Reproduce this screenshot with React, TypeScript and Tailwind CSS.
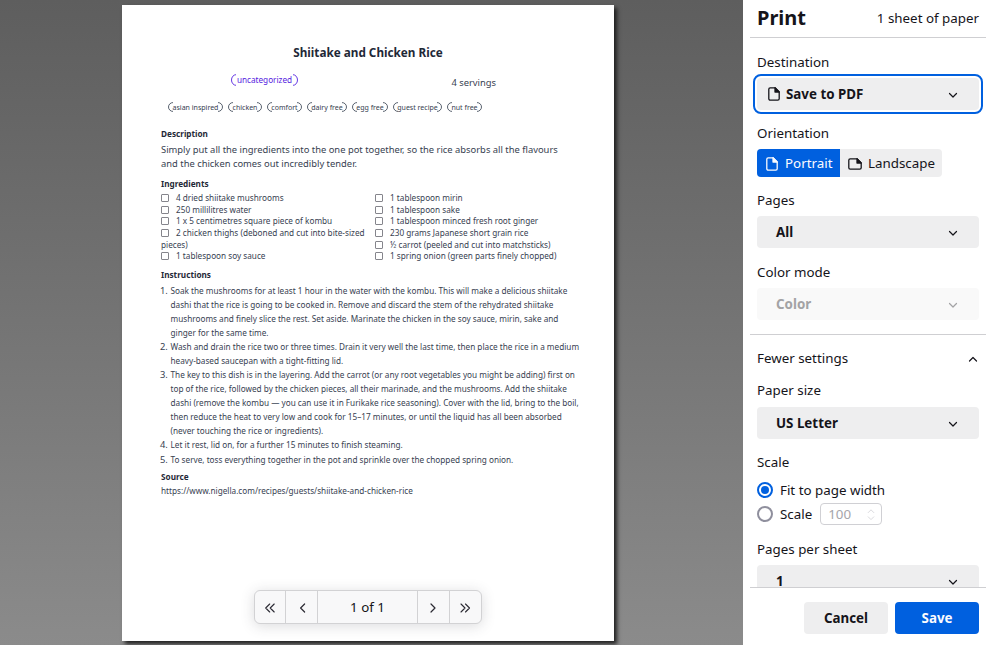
import type { ReactNode } from "react";

const tags = ["asian inspired", "chicken", "comfort", "dairy free", "egg free", "guest recipe", "nut free"];
const tagWidths = [55, 34, 35, 40, 36, 49, 35];

const leftIngredients = [
  "4 dried shiitake mushrooms",
  "250 millilitres water",
  "1 x 5 centimetres square piece of kombu",
  "2 chicken thighs (deboned and cut into bite-sized",
  "pieces)",
  "1 tablespoon soy sauce",
];
const rightIngredients = [
  "1 tablespoon mirin",
  "1 tablespoon sake",
  "1 tablespoon minced fresh root ginger",
  "230 grams Japanese short grain rice",
  "½ carrot (peeled and cut into matchsticks)",
  "1 spring onion (green parts finely chopped)",
];

const steps = [
  [
    "Soak the mushrooms for at least 1 hour in the water with the kombu. This will make a delicious shiitake",
    "dashi that the rice is going to be cooked in. Remove and discard the stem of the rehydrated shiitake",
    "mushrooms and finely slice the rest. Set aside. Marinate the chicken in the soy sauce, mirin, sake and",
    "ginger for the same time.",
  ],
  [
    "Wash and drain the rice two or three times. Drain it very well the last time, then place the rice in a medium",
    "heavy-based saucepan with a tight-fitting lid.",
  ],
  [
    "The key to this dish is in the layering. Add the carrot (or any root vegetables you might be adding) first on",
    "top of the rice, followed by the chicken pieces, all their marinade, and the mushrooms. Add the shiitake",
    "dashi (remove the kombu — you can use it in Furikake rice seasoning). Cover with the lid, bring to the boil,",
    "then reduce the heat to very low and cook for 15–17 minutes, or until the liquid has all been absorbed",
    "(never touching the rice or ingredients).",
  ],
  ["Let it rest, lid on, for a further 15 minutes to finish steaming."],
  ["To serve, toss everything together in the pot and sprinkle over the chopped spring onion."],
];

function Chevron({ dir = "down", className = "" }: { dir?: "down" | "up" | "left" | "right"; className?: string }) {
  const d = { down: "M1.5 3.5 5 7 8.5 3.5", up: "M1.5 7 5 3.5 8.5 7", left: "M7.6 1 3.600 5 7.600 9", right: "M2 1 6 5 2 9" }[dir];
  return (
    <svg viewBox="0 0 10 10" className={`size-[10px] shrink-0 overflow-visible ${className}`} fill="none" stroke="currentColor" strokeWidth="1.2" strokeLinecap="round" strokeLinejoin="round">
      <path d={d} />
    </svg>
  );
}

function PageIcon({ className = "" }: { className?: string }) {
  return (
    <svg viewBox="0 0 12 14" className={`h-[14px] w-3 shrink-0 ${className}`} fill="none" stroke="currentColor" strokeWidth="1.3" strokeLinejoin="round">
      <path d="M2.2.8H7l4.2 4.2v6.8a1.4 1.4 0 0 1-1.4 1.4H2.2A1.4 1.4 0 0 1 .8 11.8V2.2A1.4 1.4 0 0 1 2.2.8Z" />
      <path d="M7 .8V5h4.2Z" fill="currentColor" />
    </svg>
  );
}

function LandscapeIcon() {
  return (
    <svg viewBox="0 0 14 12" className="h-3 w-[14px] shrink-0" fill="none" stroke="currentColor" strokeWidth="1.3" strokeLinejoin="round">
      <path d="M2.2.8H9l4.2 4.2v4.8a1.4 1.4 0 0 1-1.4 1.4H2.2A1.4 1.4 0 0 1 .8 9.8V2.2A1.4 1.4 0 0 1 2.2.8Z" />
      <path d="M9 .8V5h4.2Z" fill="currentColor" />
    </svg>
  );
}

function Double({ dir }: { dir: "left" | "right" }) {
  return (
    <svg viewBox="0 0 10 10" className="size-[10px] overflow-visible" fill="none" stroke="currentColor" strokeWidth="1.1" strokeLinecap="round" strokeLinejoin="round">
      <path d={dir === "left" ? "M4.7 1 .7 5l4 4M9.2 1l-4 4 4 4" : "M0 1l4 4-4 4M4.500 1l4 4-4 4"} />
    </svg>
  );
}

function Arc({ flip = false }: { flip?: boolean }) {
  return (
    <svg viewBox="0 0 5 12" preserveAspectRatio="none" className={`h-full w-[5px] shrink-0 ${flip ? "-scale-x-100" : ""}`} fill="none" stroke="currentColor" strokeWidth="0.9">
      <path d="M5 .7A4.500 5.300 0 0 0 5 11.300" />
    </svg>
  );
}

function Pill({ children, width, className = "" }: { children: ReactNode; width: number; className?: string }) {
  return (
    <span style={{ width }} className={`flex shrink-0 items-center justify-between whitespace-nowrap ${className}`}>
      <Arc />
      <span className="-mx-1">{children}</span>
      <Arc flip />
    </span>
  );
}

function Heading({ children, className = "" }: { children: ReactNode; className?: string }) {
  return <h2 className={`h-[14px] text-[8.2px] leading-[14px] font-bold text-[#1f2937] ${className}`}>{children}</h2>;
}

function Ingredients({ items }: { items: string[] }) {
  return (
    <ul className="w-[214px] shrink-0 text-[8.21px] leading-[11.7px] whitespace-nowrap">
      {items.map((item) => (
        <li key={item} className="flex h-[11.7px] items-center">
          {item !== "pieces)" && <span className="mr-[7px] size-2 shrink-0 rounded-[1px] border border-[#85858c] bg-white" />}
          {item}
        </li>
      ))}
    </ul>
  );
}

function Select({ children, className = "bg-[#eeeeef]" }: { children: ReactNode; className?: string }) {
  return (
    <div className={`mt-[7px] flex h-8 items-center justify-between rounded pt-px pr-[21px] pl-[19px] font-bold ${className}`}>
      <span>{children}</span>
      <Chevron />
    </div>
  );
}

function Label({ children, className = "" }: { children: ReactNode; className?: string }) {
  return <div className={`h-[18px] leading-[18px] ${className}`}>{children}</div>;
}

function RecipePage() {
  return (
    <article className="mt-[5px] ml-[122px] h-[636px] w-[492px] bg-white px-[39px] text-[#374151] shadow-[3px_3px_4px_0px_#202020]">
      <h1 className="pt-[38px] text-center text-[11.73px] leading-[18px] font-bold text-[#1f2937]">Shiitake and Chicken Rice</h1>
      <div className="mt-[12px] flex h-[22px] items-start justify-between pr-[79px] pl-[70px]">
        <Pill width={67} className="mt-px h-[12px] text-[8.2px] text-[#5522e0]">uncategorized</Pill>
        <span className="mt-[3px] text-[9.37px] leading-[14px]">4 servings</span>
      </div>
      <div className="mt-[7px] flex h-[10px] gap-[5px] pl-[7px]">
        {tags.map((t, i) => (
          <Pill key={t} width={tagWidths[i]} className="h-[10px] text-[7.03px]">{t}</Pill>
        ))}
      </div>
      <Heading className="mt-[15px]">Description</Heading>
      <p className="mt-[2px] text-[9.38px] leading-[14px] whitespace-nowrap">
        Simply put all the ingredients into the one pot together, so the rice absorbs all the flavours
        <br />
        and the chicken comes out incredibly tender.
      </p>
      <Heading className="mt-[6px]">Ingredients</Heading>
      <div className="mt-px flex">
        <Ingredients items={leftIngredients} />
        <Ingredients items={rightIngredients} />
      </div>
      <Heading className="mt-[6px]">Instructions</Heading>
      <ol className="mt-[2px]">
        {steps.map((lines, i) => (
          <li key={i} className="flex leading-[14px] whitespace-nowrap last:mt-px">
            <span className="-ml-px w-[10.5px] shrink-0 text-[9.37px]">{i + 1}.</span>
            <div className="text-[8.21px]">
              {lines.map((l) => (
                <div key={l}>{l}</div>
              ))}
            </div>
          </li>
        ))}
      </ol>
      <Heading className="mt-[3px]">Source</Heading>
      <p className="text-[8.21px] leading-[14px]">https://www.nigella.com/recipes/guests/shiitake-and-chicken-rice</p>
    </article>
  );
}

function Pager() {
  return (
    <nav className="absolute top-[590px] left-[254px] flex h-[34px] w-[228px] rounded-md border border-[#d2d2d4] bg-[#f8f8f9] text-[#2b2a33] shadow-[0_2px_14px_rgba(58,57,68,0.18)]">
      <div className="flex w-[31px] items-center justify-center border-r border-[#d2d2d4] pt-px"><Double dir="left" /></div>
      <div className="flex w-8 items-center justify-center border-r border-[#d2d2d4] pt-px"><Chevron dir="left" /></div>
      <div className="flex w-[100px] items-center justify-center border-r border-[#d2d2d4] pt-px text-[13.33px] text-[#15141a]">1 of 1</div>
      <div className="flex w-8 items-center justify-center border-r border-[#d2d2d4] pt-px"><Chevron dir="right" /></div>
      <div className="flex flex-1 items-center justify-center pt-px"><Double dir="right" /></div>
    </nav>
  );
}

function Sidebar() {
  return (
    <aside className="flex h-full w-[246px] flex-col bg-white text-[13.35px] text-[#15141a]">
      <header className="mr-[3px] ml-[7px] flex h-[38px] shrink-0 items-center justify-between border-b border-[#cfcfd2] pr-[7px] pl-[7px]">
        <h2 className="-mt-px text-[20px] leading-[34px] font-bold">Print</h2>
        <span>1 sheet of paper</span>
      </header>
      <div className="min-h-0 flex-1 overflow-hidden">
        <div className="pr-[10px] pl-[14px]">
          <Label className="mt-[15px]">Destination</Label>
          <div className="-mx-1 mt-[3px] rounded-lg border-2 border-[#0060df] p-0.5">
            <div className="flex h-8 items-center justify-between rounded bg-[#eeeeef] pt-px pr-[21px] pl-[11px] font-bold">
              <span className="flex items-center gap-[6px]"><PageIcon />Save to PDF</span>
              <Chevron />
            </div>
          </div>
          <Label className="mt-[10px]">Orientation</Label>
          <div className="mt-[7px] flex h-7 w-[185px] overflow-hidden rounded bg-[#eeeeef]">
            <div className="flex w-[83px] items-center bg-[#0060df] pt-px pl-[9px] text-[#fbfbfe]"><PageIcon className="mr-[7px]" />Portrait</div>
            <div className="flex items-center gap-[6px] pt-px pl-2"><LandscapeIcon />Landscape</div>
          </div>
          <Label className="mt-[14px]">Pages</Label>
          <Select>All</Select>
          <Label className="mt-[15px]">Color mode</Label>
          <Select className="bg-[#f9f9f9] text-[#a3a3a5]">Color</Select>
        </div>
        <div className="mt-[14px] mr-[3px] ml-[7px] flex h-[42px] items-center justify-between border-t border-[#cfcfd2] pt-[6px] pr-2 pl-[7px]">
          Fewer settings
          <Chevron dir="up" />
        </div>
        <div className="pr-[10px] pl-[14px]">
          <Label className="mt-[5px] mb-2">Paper size</Label>
          <Select>US Letter</Select>
          <Label className="mt-[14px]">Scale</Label>
          <div className="mt-[7px] flex h-6 items-center gap-[7px] leading-6">
            <span className="flex size-4 items-center justify-center rounded-full border-2 border-[#0060df]"><span className="size-2 rounded-full bg-[#0060df]" /></span>
            Fit to page width
          </div>
          <div className="flex h-6 items-center leading-6">
            <span className="mr-[7px] size-4 rounded-full border-2 border-[#8f8f9d]" />
            Scale
            <span className="ml-2 flex h-[22px] w-[62px] items-center justify-between rounded border border-[#d0d0d4] pr-[5px] pl-[7px] text-[#a5a5aa]">
              100
              <span className="flex flex-col text-[#d8d8dc]"><Chevron dir="up" className="-mb-px h-2" /><Chevron className="h-2" /></span>
            </span>
          </div>
          <Label className="mt-[14px]">Pages per sheet</Label>
          <Select>1</Select>
        </div>
      </div>
      <footer className="mr-[3px] ml-[7px] flex h-[58px] shrink-0 justify-end gap-[7px] border-t border-[#cfcfd2] pt-[14px] pr-[7px] font-bold">
        <button className="h-8 w-[84px] rounded bg-[#eeeeef] pt-px">Cancel</button>
        <button className="h-8 w-[84px] rounded bg-[#0060df] pt-px text-[#fbfbfe]">Save</button>
      </footer>
    </aside>
  );
}

export default function App() {
  return (
    <div className="relative flex h-[645px] w-[989px] overflow-hidden font-['Noto_Sans',sans-serif]">
      <main className="h-full w-[743px] overflow-hidden bg-linear-to-b from-[#5e5e5e] to-[#8b8b8b]">
        <div className="flex"><RecipePage /></div>
        <Pager />
      </main>
      <Sidebar />
    </div>
  );
}
